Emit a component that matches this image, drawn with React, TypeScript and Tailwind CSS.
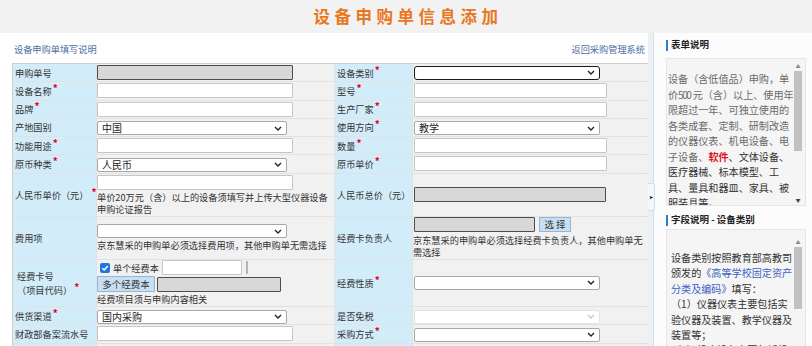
import clsx from 'clsx';
import type { ReactNode } from 'react';

const LBL = 'bg-[#d3ecfa] pl-[2px] flex items-center text-[9.2px] leading-[12px] text-[#333] whitespace-nowrap';
const CELL = 'bg-[#f2f1f1] flex items-center';
const NOTE = 'text-[9.2px] leading-[12px] text-[#333] whitespace-nowrap';

function Star({ className }: { className?: string }) {
  return <span className={clsx('text-[#e8001c] text-[10px] font-bold leading-none relative -top-[3px] ml-[1px]', className)}>*</span>;
}

function Input({ className, gray }: { className?: string; gray?: boolean }) {
  return (
    <div
      className={clsx(
        'h-[15px] shrink-0 rounded-[1px]',
        gray ? 'bg-[#d8d8d8] border-[1.5px] border-[#4d4d4d]' : 'bg-white border border-[#c6c6c6]',
        className,
      )}
    />
  );
}

function Sel({ className, value, focused, disabled }: { className?: string; value?: string; focused?: boolean; disabled?: boolean }) {
  return (
    <div
      className={clsx(
        'h-[14px] shrink-0 flex items-center justify-between pl-[4px] pr-[4px] bg-white',
        focused
          ? 'border-[1.5px] border-[#1a1a1a] rounded-[3px]'
          : disabled
            ? 'border border-[#e3e3e3] rounded-[2px]'
            : 'border border-[#a8a8a8] rounded-[2px]',
        className,
      )}
    >
      <span className="text-[10px] leading-none text-[#222]">{value}</span>
      <svg width="8" height="5" viewBox="0 0 8 5">
        <path d="M1 1L4 4L7 1" fill="none" stroke={disabled ? '#c9c9c9' : '#222'} strokeWidth="1.4" />
      </svg>
    </div>
  );
}

function Label({ children, req }: { children: ReactNode; req?: boolean }) {
  return (
    <div className={LBL}>
      {children}
      {req && <Star />}
    </div>
  );
}

function Scroll({ thumbTop, thumbH, h }: { thumbTop: string; thumbH: string; h: string }) {
  return (
    <div className={clsx('w-[10px] flex flex-col items-center', h)}>
      <div className="h-[10px] flex items-center justify-center text-[5px] leading-none text-[#8a8a8a]">▲</div>
      <div className={clsx('w-[8px] bg-[#c1c1c1]', thumbTop, thumbH)} />
      <div className="flex-1" />
      <div className="h-[10px] flex items-center justify-center text-[5px] leading-none text-[#444]">▼</div>
    </div>
  );
}

export default function App() {
  return (
    <div className="h-[346px] w-[812px] overflow-hidden bg-white font-['Noto_Sans_CJK_SC','Noto_Sans',sans-serif]">
      {/* title bar */}
      <div className="h-[33px] bg-[#f2f2f2] flex items-center justify-center">
        <h1 className="text-[16.5px] font-bold tracking-[4.5px] text-[#e8771f] leading-none pl-[4px]">设备申购单信息添加</h1>
      </div>

      <div className="flex h-[313px]">
        {/* main form */}
        <div className="w-[648px] pl-[12px]">
          <div className="h-[30px] pt-[4px] pl-[2px] pr-[3px] flex items-center justify-between text-[9.2px] text-[#4f6ea6]">
            <span>设备申购单填写说明</span>
            <span>返回采购管理系统</span>
          </div>

          <div className="grid grid-cols-[83px_237px_77px_235px] grid-rows-[repeat(6,17.25px)_42.5px_41.5px_46.5px_repeat(3,17.25px)] gap-px bg-[#e2e2e2] border border-[#cfcfcf]">
            {/* row 1 */}
            <Label>申购单号</Label>
            <div className={CELL}><Input gray className="w-[196px]" /></div>
            <Label req>设备类别</Label>
            <div className={CELL}><Sel focused className="w-[186px] ml-[1px]" /></div>

            {/* row 2 */}
            <Label req>设备名称</Label>
            <div className={CELL}><Input className="w-[196px]" /></div>
            <Label req>型号</Label>
            <div className={CELL}><Input className="w-[193px] ml-[1px]" /></div>

            {/* row 3 */}
            <Label req>品牌</Label>
            <div className={CELL}><Input className="w-[196px]" /></div>
            <Label req>生产厂家</Label>
            <div className={CELL}><Input className="w-[193px] ml-[1px]" /></div>

            {/* row 4 */}
            <Label>产地国别</Label>
            <div className={CELL}><Sel value="中国" className="w-[190px] mt-[2px]" /></div>
            <Label req>使用方向</Label>
            <div className={CELL}><Sel value="教学" className="w-[186px] ml-[1px] mt-[2px]" /></div>

            {/* row 5 */}
            <Label req>功能用途</Label>
            <div className={CELL}><Input className="w-[196px]" /></div>
            <Label req>数量</Label>
            <div className={CELL}><Input className="w-[193px] ml-[1px]" /></div>

            {/* row 6 */}
            <Label req>原币种类</Label>
            <div className={CELL}><Sel value="人民币" className="w-[190px] mt-[2px]" /></div>
            <Label req>原币单价</Label>
            <div className={CELL}><Input className="w-[193px] ml-[1px]" /></div>

            {/* row 7 */}
            <div className={LBL}>
              人民币单价（元）<Star className="ml-[3px]" />
            </div>
            <div className="bg-[#f2f1f1] flex flex-col justify-center items-start">
              <Input className="w-[196px]" />
              <div className={clsx(NOTE, 'mt-[1px]')}>
                单价20万元（含）以上的设备须填写并上传大型仪器设备
                <br />
                申购论证报告
              </div>
            </div>
            <Label>人民币总价（元）</Label>
            <div className={CELL}><Input gray className="w-[192px] ml-[1px] h-[14px]" /></div>

            {/* row 8 */}
            <Label>费用项</Label>
            <div className="bg-[#f2f1f1] flex flex-col justify-center items-start">
              <Sel className="w-[190px]" />
              <div className={clsx(NOTE, 'mt-px')}>京东慧采的申购单必须选择费用项，其他申购单无需选择</div>
            </div>
            <Label>经费卡负责人</Label>
            <div className="bg-[#f2f1f1] flex flex-col justify-center items-start">
              <div className="flex items-center ml-[1px]">
                <Input gray className="w-[121px] h-[14px]" />
                <div className="ml-[4px] h-[15px] w-[32px] bg-[#c7dff2] border border-[#93b6d6] flex items-center justify-center text-[9.5px] leading-none text-[#333]">
                  选 择
                </div>
              </div>
              <div className={clsx(NOTE, 'mt-[2px]')}>
                京东慧采的申购单必须选择经费卡负责人，其他申购单无
                <br />
                需选择
              </div>
            </div>

            {/* row 9 */}
            <div className={clsx(LBL, 'flex-col items-start justify-center pl-[4px]')}>
              <span>经费卡号</span>
              <span className="mt-[2px]">
                （项目代码）<Star className="ml-[2px]" />
              </span>
            </div>
            <div className="bg-[#f2f1f1] flex flex-col justify-center items-start">
              <div className="flex items-center h-[15px]">
                <div className="ml-[3px] w-[10px] h-[10px] rounded-[2px] bg-[#1f76e0] flex items-center justify-center">
                  <svg width="8" height="8" viewBox="0 0 8 8">
                    <path d="M1.3 4.2L3.2 6L6.8 1.9" fill="none" stroke="#fff" strokeWidth="1.5" />
                  </svg>
                </div>
                <span className={clsx(NOTE, 'ml-[3px]')}>单个经费本</span>
                <Input className="w-[80px] h-[14px] ml-[3px]" />
                <div className="ml-[4px] w-[2px] h-[13px] bg-[#b5b5b5]" />
              </div>
              <div className="flex items-center mt-px">
                <div className="h-[16px] w-[58px] bg-[#c7dff2] border border-[#93b6d6] flex items-center justify-center text-[9.5px] leading-none text-[#333]">
                  多个经费本
                </div>
                <Input gray className="w-[124px] h-[14px] ml-[2px]" />
              </div>
              <div className={clsx(NOTE, 'mt-px')}>经费项目须与申购内容相关</div>
            </div>
            <Label req>经费性质</Label>
            <div className={CELL}><Sel className="w-[186px] ml-[1px]" /></div>

            {/* row 10 */}
            <Label req>供货渠道</Label>
            <div className={CELL}><Sel value="国内采购" className="w-[190px] mt-[2px]" /></div>
            <Label>是否免税</Label>
            <div className={CELL}><Sel disabled className="w-[186px] ml-[1px] mt-[2px]" /></div>

            {/* row 11 */}
            <Label>财政部备案流水号</Label>
            <div className={CELL}><Input className="w-[196px]" /></div>
            <Label req>采购方式</Label>
            <div className={CELL}><Sel className="w-[186px] ml-[1px] mt-[2px]" /></div>

            {/* row 12 (cut off) */}
            <div className="bg-[#d3ecfa]" />
            <div className="bg-[#f2f1f1]" />
            <div className="bg-[#d3ecfa]" />
            <div className="bg-[#f2f1f1]" />
          </div>
        </div>

        {/* splitter */}
        <div className="w-[6px] relative bg-[#eaf0f6] border-r border-[#d6e0ea]">
          <div className="absolute left-0 top-[150px] w-[7px] h-[28px] rounded-r-[3px] bg-[#f5f8fb] border border-l-0 border-[#d2dce6] flex items-center justify-center text-[6px] leading-none text-[#111]">
            ▸
          </div>
        </div>

        {/* sidebar */}
        <aside className="flex-1 bg-[#fcfcfc] pl-[12px]">
          <div className="h-[24px] flex items-center">
            <div className="w-[2px] h-[11px] bg-[#2f7ad6]" />
            <span className="ml-[3px] text-[9.5px] font-bold text-[#222] leading-none">表单说明</span>
          </div>
          <div className="mt-[1px] w-[140px] h-[148px] bg-[#f5f5f5] border border-[#e6e6e6] flex overflow-hidden">
            <div className="flex-1 pl-[1px] pt-[12px] text-[10.1px] leading-[15.5px] whitespace-nowrap overflow-hidden">
              <div className="text-[#6a6a6a]">设备（含低值品）申购，单</div>
              <div className="text-[#6a6a6a]">
                价<span className="tracking-[-1.5px]">500</span> 元（含）以上、使用年
              </div>
              <div className="text-[#6a6a6a]">限超过一年、可独立使用的</div>
              <div className="text-[#6a6a6a]">各类成套、定制、研制改造</div>
              <div className="text-[#6a6a6a]">的仪器仪表、机电设备、电</div>
              <div className="text-[#333]">
                <span className="text-[#6a6a6a]">子设备、</span>
                <span className="text-[#e0141e] font-bold">软件</span>、文体设备、
              </div>
              <div className="text-[#333]">医疗器械、标本模型、工</div>
              <div className="text-[#333]">具、量具和器皿、家具、被</div>
              <div className="text-[#333]">服装具等。</div>
            </div>
            <div className="pt-[1px] pr-[2px]">
              <Scroll h="h-[144px]" thumbTop="mt-[1px]" thumbH="h-[80px]" />
            </div>
          </div>

          <div className="h-[23px] pt-[5px] flex items-center">
            <div className="w-[2px] h-[11px] bg-[#2f7ad6]" />
            <span className="ml-[3px] text-[9.5px] font-bold text-[#222] leading-none">字段说明 - 设备类别</span>
          </div>
          <div className="w-[140px] h-[140px] bg-[#f5f5f5] border border-[#e6e6e6] flex overflow-hidden">
            <div className="flex-1 pl-[4px] pt-[20px] text-[10.1px] leading-[15.4px] text-[#333] whitespace-nowrap overflow-hidden">
              <div>设备类别按照教育部高教司</div>
              <div>
                颁发的<span className="text-[#3c5fc4]">《高等学校固定资产</span>
              </div>
              <div>
                <span className="text-[#3c5fc4]">分类及编码》</span>填写：
              </div>
              <div>（1）仪器仪表主要包括实</div>
              <div>验仪器及装置、教学仪器及</div>
              <div>装置等；</div>
              <div>（2）机床设备主要包括机</div>
            </div>
            <div className="pt-[6px] pr-[2px]">
              <Scroll h="h-[130px]" thumbTop="mt-[1px]" thumbH="h-[62px]" />
            </div>
          </div>
        </aside>
      </div>
    </div>
  );
}
